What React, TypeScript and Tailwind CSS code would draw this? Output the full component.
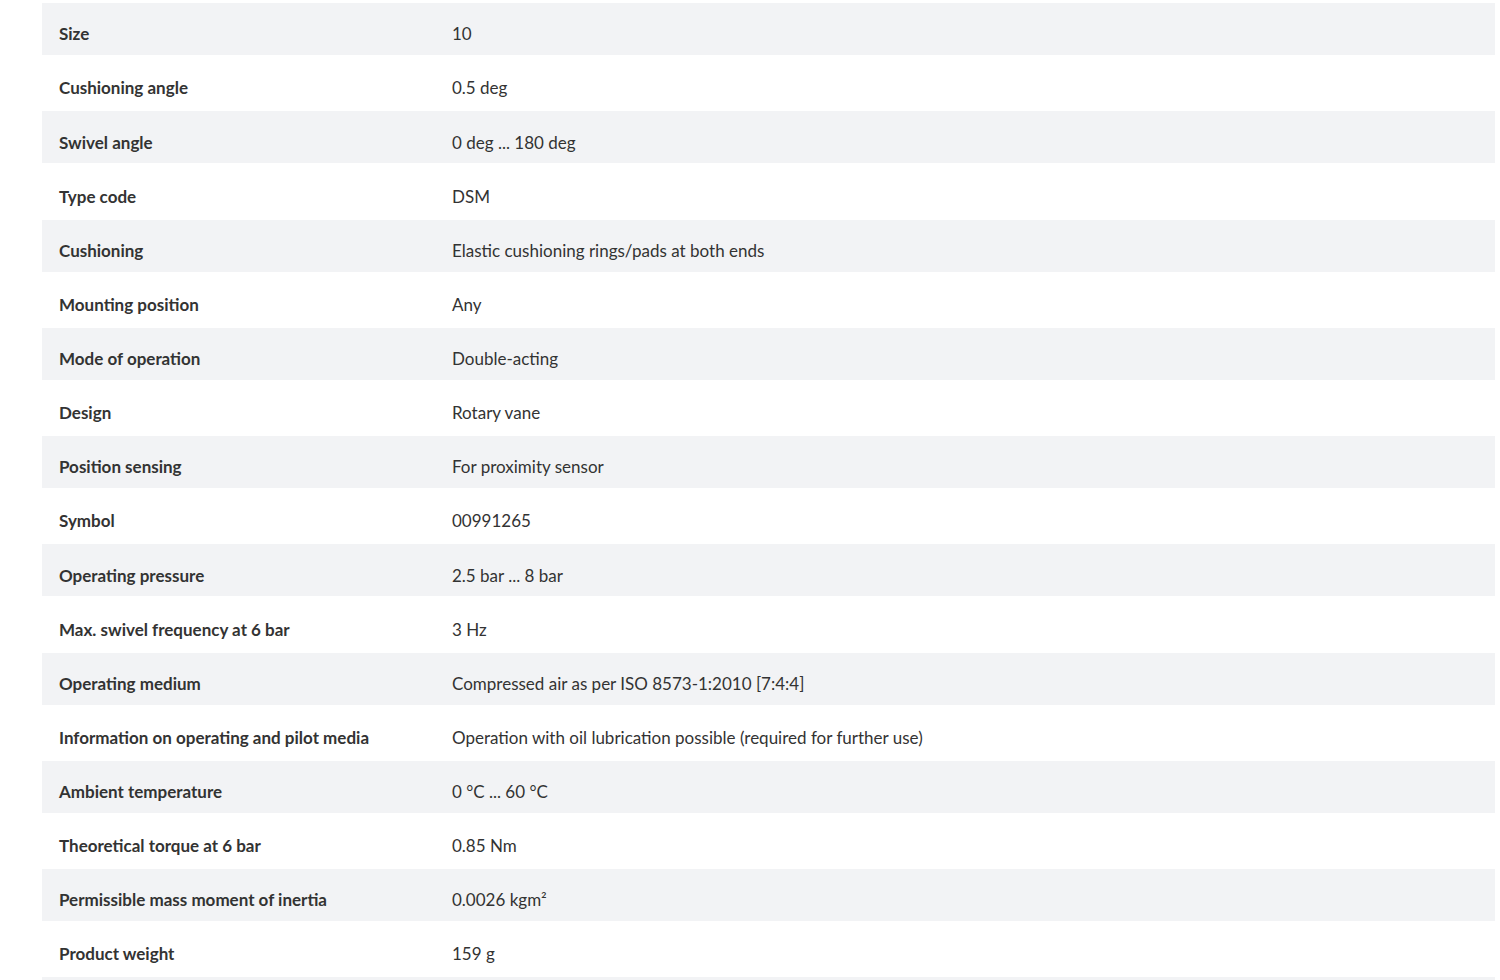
import React from "react";

const rows: [string, string][] = [
  ["Size", "10"],
  ["Cushioning angle", "0.5 deg"],
  ["Swivel angle", "0 deg ... 180 deg"],
  ["Type code", "DSM"],
  ["Cushioning", "Elastic cushioning rings/pads at both ends"],
  ["Mounting position", "Any"],
  ["Mode of operation", "Double-acting"],
  ["Design", "Rotary vane"],
  ["Position sensing", "For proximity sensor"],
  ["Symbol", "00991265"],
  ["Operating pressure", "2.5 bar ... 8 bar"],
  ["Max. swivel frequency at 6 bar", "3 Hz"],
  ["Operating medium", "Compressed air as per ISO 8573-1:2010 [7:4:4]"],
  ["Information on operating and pilot media", "Operation with oil lubrication possible (required for further use)"],
  ["Ambient temperature", "0 °C ... 60 °C"],
  ["Theoretical torque at 6 bar", "0.85 Nm"],
  ["Permissible mass moment of inertia", "0.0026 kgm²"],
  ["Product weight", "159 g"],
  ["", ""],
];

export default function App() {
  return (
    <div
      className="w-[1500px] h-[980px] overflow-hidden bg-white text-[#333333]"
      style={{ fontFamily: "Lato, 'Liberation Sans', sans-serif" }}
    >
      <div className="ml-[42px] mr-[5px] mt-[3px] flex flex-col">
        {rows.map(([k, v], i) => (
          <div
            key={i}
            className={
              i % 2 === 0
                ? "flex items-center h-[52px] bg-[#f2f3f5] pt-[10px] text-[17px]"
                : "flex items-center h-[56.25px] bg-white pt-[10px] text-[17px]"
            }
          >
            <div className="w-[410px] pl-[17px] font-bold">{k}</div>
            <div className="flex-1">{v}</div>
          </div>
        ))}
      </div>
    </div>
  );
}
